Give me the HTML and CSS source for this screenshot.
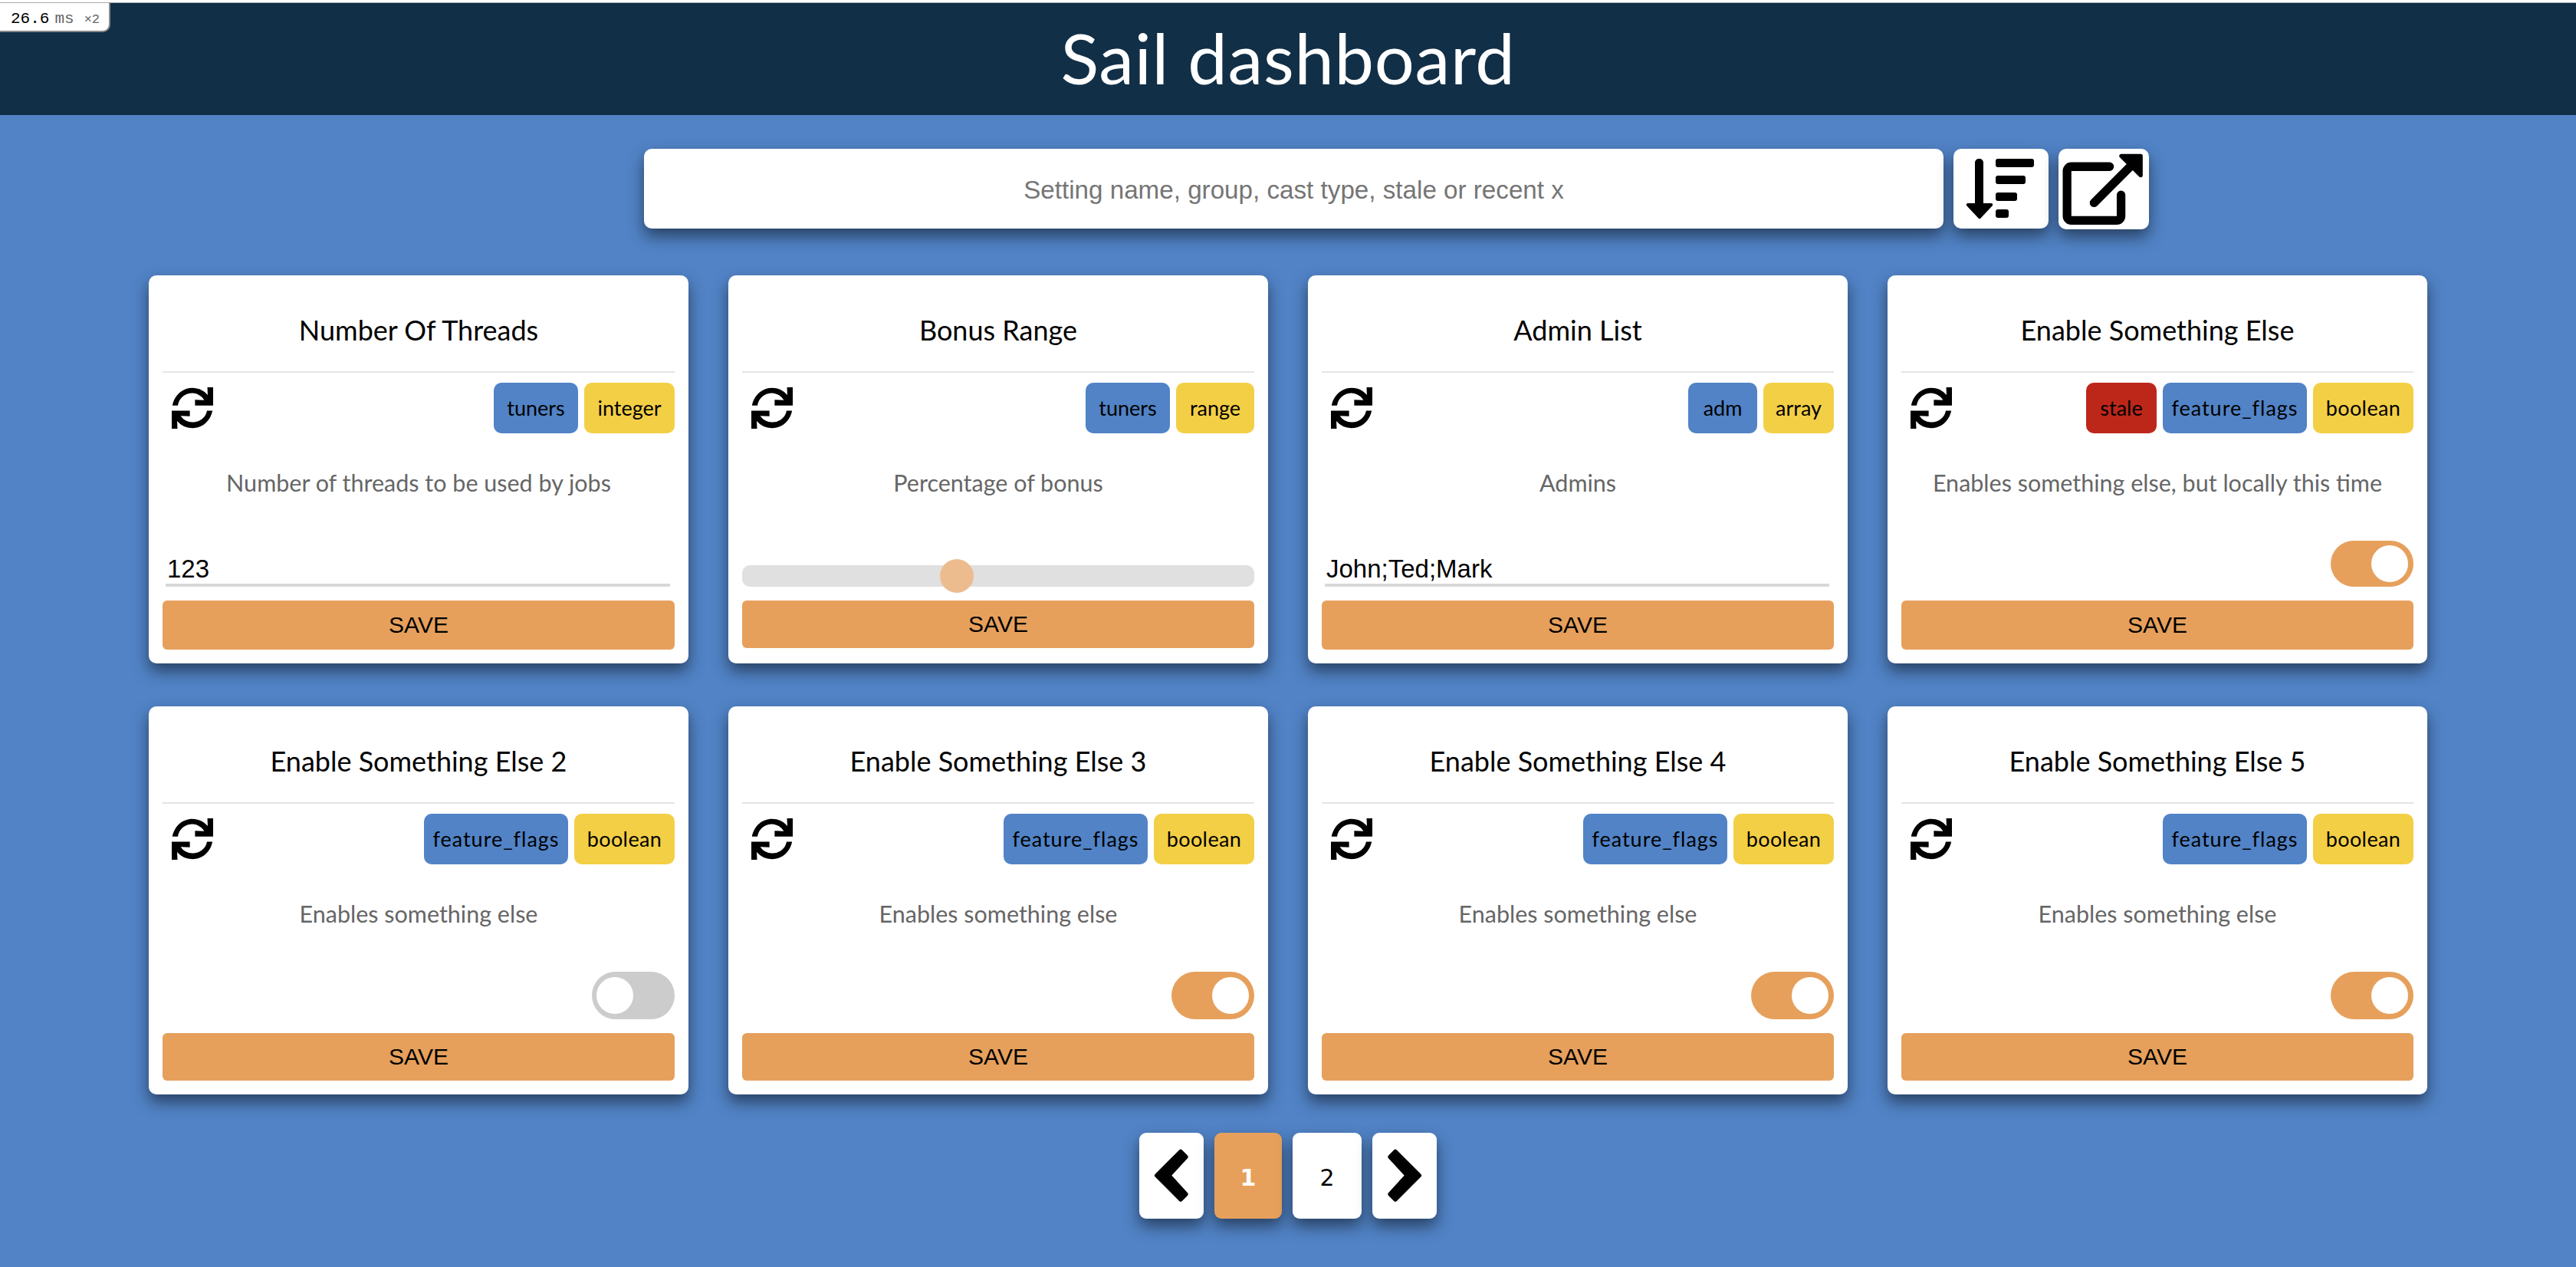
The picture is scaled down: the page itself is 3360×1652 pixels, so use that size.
FILE: index.html
```html
<!DOCTYPE html>
<html>
<head>
    <title>Sail dashboard</title>
    <link rel="stylesheet" href="styles.css">
</head>
<body>
    <svg class="sprites" width="0" height="0">
        <symbol id="sync" viewBox="0 0 512 512">
            <path d="M445 95A247 247 0 0 0 256 8C135 8 34 95 8 224H76A176 176 0 0 1 402 158L288 153V224H512V0H441zM256 432A176 176 0 0 1 110 354L224 359V288H0V512H71L67 417A247 247 0 0 0 256 504C377 504 478 417 504 288H436A176 176 0 0 1 256 432z"/>
        </symbol>
    </svg>

    <div class="timer"><b>26.6</b><span>ms</span><small>×2</small></div>

    <header class="top-bar">
        <h1>Sail dashboard</h1>
    </header>

    <div class="search-row">
        <input class="search" type="text" placeholder="Setting name, group, cast type, stale or recent x">
        <button class="tool-btn sort-btn">
            <svg viewBox="0 0 124 104" width="124" height="104">
                <path d="M28 18a5 5 0 0 1 5-5h1a5 5 0 0 1 5 5v53h10a2 2 0 0 1 1.500 3.500L35 91a2 2 0 0 1-2 0L17.500 74.500A2 2 0 0 1 19 71h9z"/>
                <rect x="55" y="13" width="50" height="11" rx="3"/>
                <rect x="55" y="35" width="39" height="11" rx="3"/>
                <rect x="55" y="57" width="28" height="11" rx="3"/>
                <rect x="55" y="79" width="17" height="11" rx="3"/>
            </svg>
        </button>
        <button class="tool-btn share-btn">
            <svg viewBox="0 0 354 316" width="118" height="105">
                <path class="share-box" d="M200 70H50a17 17 0 0 0-17 17V264a17 17 0 0 0 17 17H228a17 17 0 0 0 17-17V181"/>
                <path class="share-shaft" d="M139 212L290 61"/>
                <path class="share-head" d="M246 28H322V104z"/>
            </svg>
        </button>
    </div>

    <main class="grid">
        <section class="card">
            <h2>Number Of Threads</h2>
            <div class="meta">
                <svg class="sync"><use href="#sync"/></svg>
                <div class="tags"><span class="tag blue w-tuners">tuners</span><span class="tag yellow w-integer">integer</span></div>
            </div>
            <p class="desc">Number of threads to be used by jobs</p>
            <div class="control">
                <input class="text-input" type="text" value="123">
            </div>
            <button class="save">SAVE</button>
        </section>

        <section class="card">
            <h2>Bonus Range</h2>
            <div class="meta">
                <svg class="sync"><use href="#sync"/></svg>
                <div class="tags"><span class="tag blue w-tuners">tuners</span><span class="tag yellow w-range">range</span></div>
            </div>
            <p class="desc">Percentage of bonus</p>
            <div class="control">
                <div class="slider"><span class="thumb"></span></div>
            </div>
            <button class="save short lifted">SAVE</button>
        </section>

        <section class="card">
            <h2>Admin List</h2>
            <div class="meta">
                <svg class="sync"><use href="#sync"/></svg>
                <div class="tags"><span class="tag blue w-adm">adm</span><span class="tag yellow w-array">array</span></div>
            </div>
            <p class="desc">Admins</p>
            <div class="control">
                <input class="text-input" type="text" value="John;Ted;Mark">
            </div>
            <button class="save">SAVE</button>
        </section>

        <section class="card">
            <h2>Enable Something Else</h2>
            <div class="meta">
                <svg class="sync"><use href="#sync"/></svg>
                <div class="tags"><span class="tag red w-stale">stale</span><span class="tag blue w-flags">feature_flags</span><span class="tag yellow w-boolean">boolean</span></div>
            </div>
            <p class="desc">Enables something else, but locally this time</p>
            <div class="control">
                <span class="toggle on thin"><span class="knob"></span></span>
            </div>
            <button class="save">SAVE</button>
        </section>

        <section class="card">
            <h2>Enable Something Else 2</h2>
            <div class="meta">
                <svg class="sync"><use href="#sync"/></svg>
                <div class="tags"><span class="tag blue w-flags">feature_flags</span><span class="tag yellow w-boolean">boolean</span></div>
            </div>
            <p class="desc">Enables something else</p>
            <div class="control">
                <span class="toggle"><span class="knob"></span></span>
            </div>
            <button class="save short">SAVE</button>
        </section>

        <section class="card">
            <h2>Enable Something Else 3</h2>
            <div class="meta">
                <svg class="sync"><use href="#sync"/></svg>
                <div class="tags"><span class="tag blue w-flags">feature_flags</span><span class="tag yellow w-boolean">boolean</span></div>
            </div>
            <p class="desc">Enables something else</p>
            <div class="control">
                <span class="toggle on"><span class="knob"></span></span>
            </div>
            <button class="save short">SAVE</button>
        </section>

        <section class="card">
            <h2>Enable Something Else 4</h2>
            <div class="meta">
                <svg class="sync"><use href="#sync"/></svg>
                <div class="tags"><span class="tag blue w-flags">feature_flags</span><span class="tag yellow w-boolean">boolean</span></div>
            </div>
            <p class="desc">Enables something else</p>
            <div class="control">
                <span class="toggle on"><span class="knob"></span></span>
            </div>
            <button class="save short">SAVE</button>
        </section>

        <section class="card">
            <h2>Enable Something Else 5</h2>
            <div class="meta">
                <svg class="sync"><use href="#sync"/></svg>
                <div class="tags"><span class="tag blue w-flags">feature_flags</span><span class="tag yellow w-boolean">boolean</span></div>
            </div>
            <p class="desc">Enables something else</p>
            <div class="control">
                <span class="toggle on"><span class="knob"></span></span>
            </div>
            <button class="save short">SAVE</button>
        </section>
    </main>

    <nav class="pager">
        <button class="page-btn arrow">
            <svg viewBox="0 0 252 336" width="84" height="112"><path class="chevron" d="M162 73L183 94L116 167L183 240L162 261L68 167z"/></svg>
        </button>
        <button class="page-btn num current">1</button>
        <button class="page-btn num">2</button>
        <button class="page-btn arrow">
            <svg viewBox="0 0 252 336" width="84" height="112"><path class="chevron" d="M90 73L69 94L136 167L69 240L90 261L184 167z"/></svg>
        </button>
    </nav>
</body>
</html>
```

FILE: styles.css
```css
* {
    box-sizing: border-box;
}
body {
    margin: 0;
    height: 1652px;
    overflow: hidden;
    background-color: #5183c6;
    font-family: "Lato", "Liberation Sans", sans-serif;
    color: #000;
}
button {
    border: none;
    padding: 0;
    cursor: pointer;
}
.sprites {
    position: absolute;
}

.timer {
    position: absolute;
    top: 3px;
    left: 0;
    display: flex;
    align-items: baseline;
    width: 144px;
    height: 39px;
    padding: 9px 0 0 14px;
    background-color: #fff;
    border-top: 1px solid #aaa;
    border-right: 2px solid #888;
    border-bottom: 2px solid #888;
    border-bottom-right-radius: 10px;
    font-family: "Liberation Mono", monospace;
    font-size: 21px;
    line-height: 24px;
    white-space: nowrap;
}
.timer b {
    font-weight: normal;
}
.timer span {
    margin-left: 7px;
    color: #666;
}
.timer small {
    margin-left: 13px;
    color: #666;
    font-size: 17px;
}

.top-bar {
    height: 150px;
    padding-top: 3px;
    background-color: #fff;
    text-align: center;
}
.top-bar h1 {
    height: 147px;
    margin: 0;
    border-top: 1px solid #aaa;
    background-color: #112f47;
    color: #fff;
    font-size: 92px;
    font-weight: 400;
    letter-spacing: 0.7px;
    line-height: 142px;
}

.search-row {
    display: flex;
    align-items: flex-start;
    margin: 44px 0 0 840px;
    gap: 13px;
}
.search {
    width: 1695px;
    height: 104px;
    padding: 3px 0 0;
    border: none;
    border-radius: 10px;
    outline: none;
    text-align: center;
    font-family: "Liberation Sans", sans-serif;
    font-size: 33.200px;
    box-shadow: 0 10px 20px rgba(0, 0, 0, 0.5);
}
.search::placeholder {
    color: #757575;
}
.tool-btn {
    display: block;
    background-color: #fff;
    border-radius: 10px;
    box-shadow: 0 10px 20px rgba(0, 0, 0, 0.5);
}
.tool-btn svg {
    display: block;
}
.sort-btn {
    width: 124px;
    height: 104px;
}
.share-btn {
    width: 118px;
    height: 105px;
}
.share-box,
.share-shaft {
    fill: none;
    stroke: #000;
    stroke-width: 34;
    stroke-linecap: round;
}
.share-head {
    stroke: #000;
    stroke-width: 16;
    stroke-linejoin: round;
}

.grid {
    display: grid;
    grid-template-columns: repeat(4, 704px);
    justify-content: center;
    gap: 56px 52px;
    margin-top: 60px;
}
.card {
    display: flex;
    flex-direction: column;
    height: 506px;
    padding: 0 18px 18px;
    background-color: #fff;
    border-radius: 10px;
    box-shadow: 0 10px 20px rgba(0, 0, 0, 0.5);
}
.card h2 {
    height: 127px;
    margin: 0;
    border-bottom: 2px solid #e5e5e5;
    font-size: 36px;
    font-weight: 400;
    line-height: 143px;
    text-align: center;
}
.meta {
    display: flex;
    justify-content: space-between;
    height: 66px;
    margin-top: 13px;
}
.sync {
    width: 54px;
    height: 54px;
    margin: 6px 0 0 12px;
}
.tags {
    display: flex;
    gap: 8px;
}
.tag {
    height: 66px;
    border-radius: 10px;
    font-size: 27px;
    line-height: 65px;
    text-align: center;
}
.tag.blue {
    background-color: #5183c6;
}
.tag.yellow {
    background-color: #f3cf45;
}
.tag.red {
    background-color: #bd271a;
}
.w-tuners {
    width: 110px;
}
.w-integer {
    width: 118px;
}
.w-range {
    width: 102px;
}
.w-adm {
    width: 90px;
}
.w-array {
    width: 92px;
}
.w-stale {
    width: 92px;
}
.w-flags {
    width: 188px;
    letter-spacing: 1px;
}
.w-boolean {
    width: 131px;
    letter-spacing: 0.4px;
}
.desc {
    margin: 0;
    padding-top: 44px;
    color: #666;
    font-size: 30.500px;
    line-height: 40px;
    text-align: center;
}
.control {
    display: flex;
    flex: 1;
    flex-direction: column;
    justify-content: flex-end;
    padding-bottom: 18px;
}
.text-input {
    width: 658px;
    height: 40px;
    margin: 0 4px;
    padding: 0 2px 3px;
    border: none;
    border-bottom: 4px solid #d8d8d8;
    outline: none;
    font-family: "Liberation Sans", sans-serif;
    font-size: 33px;
}
.slider {
    position: relative;
    height: 28px;
    background-color: #e0e0e0;
    border-radius: 10px;
}
.thumb {
    position: absolute;
    top: -8px;
    left: 258px;
    width: 44px;
    height: 44px;
    background-color: #ecbc8f;
    border-radius: 50%;
}
.toggle {
    position: relative;
    align-self: flex-end;
    width: 108px;
    height: 62px;
    background-color: #ccc;
    border-radius: 31px;
}
.toggle.on {
    background-color: #e6a05c;
}
.toggle.thin {
    height: 60px;
    border-radius: 30px;
}
.knob {
    position: absolute;
    top: 7px;
    left: 6px;
    width: 48px;
    height: 48px;
    background-color: #fff;
    border-radius: 50%;
}
.toggle.on .knob {
    left: 53px;
}
.toggle.thin .knob {
    top: 6px;
}
.save {
    width: 100%;
    height: 64px;
    background-color: #e6a05c;
    border-radius: 6px;
    font-family: "Liberation Sans", sans-serif;
    font-size: 30px;
    color: #000;
}
.save.short {
    height: 62px;
}
.save.lifted {
    margin-bottom: 2px;
}

.pager {
    display: flex;
    justify-content: center;
    gap: 14px;
    margin-top: 50px;
}
.page-btn {
    height: 112px;
    background-color: #fff;
    border-radius: 9px;
    box-shadow: 0 10px 20px rgba(0, 0, 0, 0.5);
}
.page-btn svg {
    display: block;
}
.arrow {
    width: 84px;
}
.chevron {
    stroke: #000;
    stroke-width: 16;
    stroke-linejoin: round;
}
.num {
    width: 90px;
    padding-top: 5px;
    font-family: "DejaVu Sans", sans-serif;
    font-size: 30px;
    color: #000;
}
.current {
    width: 88px;
    background-color: #e6a05c;
    color: #fff;
    font-weight: bold;
}
```
